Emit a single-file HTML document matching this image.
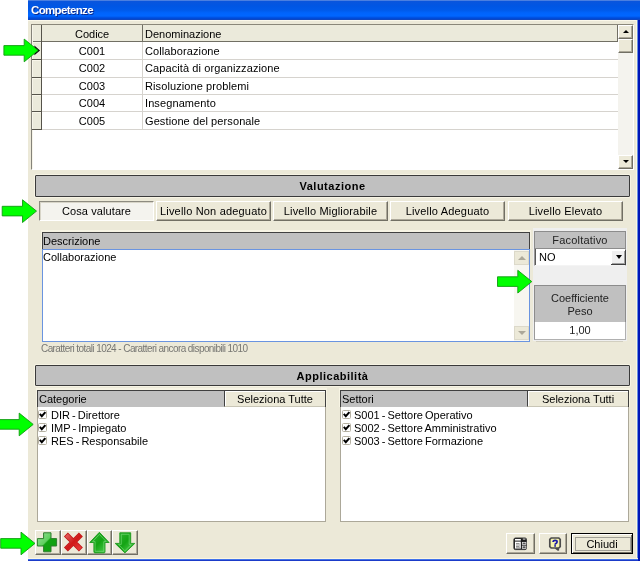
<!DOCTYPE html>
<html><head><meta charset="utf-8">
<style>
*{box-sizing:border-box;margin:0;padding:0}
html,body{width:641px;height:562px;background:#fff;overflow:hidden;position:relative;font-family:"Liberation Sans",sans-serif;font-size:11px;color:#000}
.a{position:absolute}
.t{position:absolute;white-space:pre;line-height:13px;will-change:transform}
#win{left:28px;top:0;width:613px;height:562px}
#title{left:28px;top:0;width:612px;height:20px;background:linear-gradient(to bottom,#4a7fe0 0,#4a7fe0 1px,#0a55dc 1px,#0056e4 6px,#005ae9 10px,#0064fc 13px,#0066ff 16px,#0052e4 17.5px,#0046d0 19px,#1c48b4 20px)}
#title .t{left:3px;top:3.5px;color:#fff;font-weight:bold;font-size:11.5px;letter-spacing:-0.65px;text-shadow:1px 1px 0 #0a2a8e}
#body{left:28px;top:20px;width:609px;height:539px;background:#ece9d8}
#rb{left:636px;top:20px;width:4px;height:541px;background:linear-gradient(to right,#fbf6de 0,#fbf6de 1px,#6a90e0 1px,#6a90e0 2px,#0018c0 2px,#0014ac 4px)}
#bb{left:28px;top:558px;width:610px;height:3px;background:linear-gradient(to bottom,#fbf6e0 0,#fbf6e0 1px,#4273ea 1px,#4273ea 2px,#1b3bc9 2px,#1b3bc9 3px)}
.btn{position:absolute;background:#ece9d8;border-top:1px solid #fff;border-left:1px solid #fff;border-right:1px solid #716f64;border-bottom:1px solid #716f64;box-shadow:inset -1px -1px 0 #aca899}
.btn .t{left:0;right:0;text-align:center;letter-spacing:0.18px}
.panel{position:absolute;background:#c0c0c0;border:1px solid #3a3a3a;border-radius:1px;box-shadow:0 0 0 1px #f7f4e4}
.panel .t{left:0;right:0;text-align:center;font-weight:bold;letter-spacing:0.5px}
.hdr{position:absolute;background:#c0c0c0;border-top:1px solid #404040;border-left:1px solid #404040;box-shadow:0 -1px 0 1px #f7f4e4}
</style></head><body>
<div class="a" id="title"><div class="t">Competenze</div></div>
<div class="a" id="body"></div>
<div class="a" style="left:28px;top:20px;width:609px;height:1px;background:#fbf8ea"></div>
<div class="a" id="rb"></div>
<div class="a" id="bb"></div>

<!-- GRID -->
<div class="a" style="left:31px;top:24px;width:603px;height:146px;background:#fff;border-top:1px solid #8a877a;border-left:1px solid #85837a;border-right:1px solid #fff;border-bottom:1px solid #fff"></div>
<!-- header -->
<div class="a" style="left:32px;top:25px;width:586px;height:17px;background:#ebeadb;border-bottom:1px solid #716f64"></div>
<div class="a" style="left:32px;top:25px;width:1px;height:144px;background:#f7f5ea"></div>
<div class="a" style="left:41px;top:25px;width:1px;height:105px;background:#55534a"></div>
<div class="a" style="left:142px;top:25px;width:1px;height:17px;background:#716f64"></div>
<div class="a" style="left:617px;top:25px;width:1px;height:17px;background:#716f64"></div>
<div class="t" style="left:75px;top:28px">Codice</div>
<div class="a" style="left:142px;top:42px;width:1px;height:87px;background:#d6d3ce"></div>
<div class="t" style="left:145px;top:28px">Denominazione</div>
<!-- indicator col -->
<div class="a" style="left:33px;top:42px;width:8px;height:88px;background:#ebeadb"></div>
<!-- rows -->
<div class="a" style="left:33px;top:112px;width:8px;height:1px;background:#f8f6ea"></div>
<div class="a" style="left:33px;top:95px;width:8px;height:1px;background:#f8f6ea"></div>
<div class="a" style="left:33px;top:78px;width:8px;height:1px;background:#f8f6ea"></div>
<div class="a" style="left:33px;top:60px;width:8px;height:1px;background:#f8f6ea"></div>
<div class="a" style="left:33px;top:42px;width:8px;height:1px;background:#f8f6ea"></div>
<div class="a" style="left:42px;top:59px;width:576px;height:1px;background:#d6d3ce"></div>
<div class="a" style="left:32px;top:59px;width:10px;height:1px;background:#55534a"></div>
<div class="t" style="left:42px;width:100px;text-align:center;top:45px">C001</div>
<div class="t" style="left:145px;top:45px;letter-spacing:0.1px">Collaborazione</div>
<div class="a" style="left:42px;top:77px;width:576px;height:1px;background:#d6d3ce"></div>
<div class="a" style="left:32px;top:77px;width:10px;height:1px;background:#55534a"></div>
<div class="t" style="left:42px;width:100px;text-align:center;top:62px">C002</div>
<div class="t" style="left:145px;top:62px;letter-spacing:0.1px">Capacità di organizzazione</div>
<div class="a" style="left:42px;top:94px;width:576px;height:1px;background:#d6d3ce"></div>
<div class="a" style="left:32px;top:94px;width:10px;height:1px;background:#55534a"></div>
<div class="t" style="left:42px;width:100px;text-align:center;top:80px">C003</div>
<div class="t" style="left:145px;top:80px;letter-spacing:0.1px">Risoluzione problemi</div>
<div class="a" style="left:42px;top:111px;width:576px;height:1px;background:#d6d3ce"></div>
<div class="a" style="left:32px;top:111px;width:10px;height:1px;background:#55534a"></div>
<div class="t" style="left:42px;width:100px;text-align:center;top:97px">C004</div>
<div class="t" style="left:145px;top:97px;letter-spacing:0.1px">Insegnamento</div>
<div class="a" style="left:42px;top:129px;width:576px;height:1px;background:#d6d3ce"></div>
<div class="a" style="left:32px;top:129px;width:10px;height:1px;background:#55534a"></div>
<div class="t" style="left:42px;width:100px;text-align:center;top:115px">C005</div>
<div class="t" style="left:145px;top:115px;letter-spacing:0.1px">Gestione del personale</div>

<!-- scrollbar -->
<div class="a" style="left:618px;top:25px;width:15px;height:144px;background:#f4f3ee"></div>
<div class="btn" style="left:618px;top:25px;width:15px;height:14px"></div>
<div class="a" style="left:623px;top:30px;width:0;height:0;border-left:3px solid transparent;border-right:3px solid transparent;border-bottom:3px solid #000"></div>
<div class="btn" style="left:618px;top:39px;width:15px;height:14px"></div>
<div class="btn" style="left:618px;top:155px;width:15px;height:14px"></div>
<div class="a" style="left:623px;top:160px;width:0;height:0;border-left:3px solid transparent;border-right:3px solid transparent;border-top:3px solid #000"></div>

<!-- VALUTAZIONE -->
<div class="panel" style="left:35px;top:175px;width:595px;height:22px"><div class="t" style="top:4px">Valutazione</div></div>
<div class="a" style="left:39px;top:201px;width:115px;height:20px;background:#f4f3ee;border-top:1px solid #8d8b80;border-left:1px solid #8d8b80;border-right:1px solid #fff;border-bottom:1px solid #fff;box-shadow:inset 1px 1px 0 #d8d5c8"><div class="t" style="left:0;right:0;text-align:center;top:3px;letter-spacing:0.1px">Cosa valutare</div></div>
<div class="btn" style="left:156px;top:201px;width:115px;height:20px"><div class="t" style="top:3px">Livello Non adeguato</div></div>
<div class="btn" style="left:273px;top:201px;width:115px;height:20px"><div class="t" style="top:3px">Livello Migliorabile</div></div>
<div class="btn" style="left:390px;top:201px;width:115px;height:20px"><div class="t" style="top:3px">Livello Adeguato</div></div>
<div class="btn" style="left:508px;top:201px;width:115px;height:20px"><div class="t" style="top:3px">Livello Elevato</div></div>

<!-- DESCRIZIONE -->
<div class="a" style="left:42px;top:232px;width:488px;height:17px;background:#c0c0c0;border-top:1px solid #404040;border-left:1px solid #404040;border-right:1px solid #404040;box-shadow:0 -1px 0 1px #f7f4e4"><div class="t" style="left:0px;top:2px">Descrizione</div></div>
<div class="a" style="left:42px;top:249px;width:488px;height:93px;background:#fff;border:1px solid #6a94e0"><div class="t" style="left:0px;top:1px">Collaborazione</div></div>
<div class="a" style="left:514px;top:250px;width:15px;height:91px;background:#f7f6f0"></div>
<div class="a" style="left:514px;top:251px;width:15px;height:14px;background:#ece9d8;border:1px solid #dcd9ca"></div>
<div class="a" style="left:518px;top:256px;width:0;height:0;border-left:4px solid transparent;border-right:4px solid transparent;border-bottom:4px solid #aca899"></div>
<div class="a" style="left:514px;top:326px;width:15px;height:14px;background:#ece9d8;border:1px solid #dcd9ca"></div>
<div class="a" style="left:518px;top:331px;width:0;height:0;border-left:4px solid transparent;border-right:4px solid transparent;border-top:4px solid #aca899"></div>
<div class="t" style="left:41px;top:342px;font-size:10px;letter-spacing:-0.58px;color:#777773">Caratteri totali 1024 - Caratteri ancora disponibili 1010</div>

<!-- RIGHT PANEL -->
<div class="a" style="left:533px;top:228px;width:94px;height:113px;background:#efefef"></div>
<div class="a" style="left:536px;top:341px;width:87px;height:1px;background:#d2cfc0"></div>
<div class="a" style="left:534px;top:231px;width:92px;height:18px;background:#c0c0c0;border:1px solid #8c8c8c"><div class="t" style="left:0;right:0;text-align:center;top:2px;color:#222;letter-spacing:0.2px">Facoltativo</div></div>
<div class="a" style="left:534px;top:249px;width:92px;height:17px;background:#fff;border-left:1px solid #9a9a9a;border-right:1px solid #9a9a9a;border-bottom:1px solid #f4f4f4;box-shadow:inset 1px 0 0 #5a5a5a"><div class="t" style="left:4px;top:2px">NO</div></div>
<div class="a" style="left:611px;top:250px;width:15px;height:15px;background:#f0f0f0;border-right:1px solid #404040;border-bottom:1px solid #404040;box-shadow:inset 1px 1px 0 #fff,inset -1px -1px 0 #a0a0a0"></div>
<div class="a" style="left:616px;top:255px;width:0;height:0;border-left:3px solid transparent;border-right:3px solid transparent;border-top:4px solid #000"></div>
<div class="a" style="left:534px;top:285px;width:92px;height:38px;background:#c0c0c0;border:1px solid #8c8c8c"><div class="t" style="left:0;right:0;text-align:center;top:6px;color:#222;line-height:13px">Coefficiente
Peso</div></div>
<div class="a" style="left:534px;top:322px;width:92px;height:18px;background:#fff;border:1px solid #b0b0b0;border-top:none;border-left-color:#9a9a9a"><div class="t" style="left:0;right:0;text-align:center;top:2px;color:#222">1,00</div></div>

<!-- APPLICABILITA -->
<div class="panel" style="left:35px;top:365px;width:595px;height:21px"><div class="t" style="top:4px">Applicabilità</div></div>

<div class="a" style="left:37px;top:407px;width:289px;height:115px;background:#fff;border:1px solid #aca899;border-top:none"></div>
<div class="hdr" style="left:37px;top:390px;width:289px;height:17px;border-right:1px solid #404040"><div class="t" style="left:1px;top:2px">Categorie</div></div>
<div class="a" style="left:224px;top:391px;width:101px;height:16px;background:#ece9d8;border-left:1px solid #404040;border-bottom:1px solid #c9c6b6;box-shadow:inset 1px 1px 0 #fff"><div class="t" style="left:0;right:0;text-align:center;top:1.5px">Seleziona Tutte</div></div>

<div class="a" style="left:340px;top:407px;width:289px;height:115px;background:#fff;border:1px solid #aca899;border-top:none"></div>
<div class="hdr" style="left:340px;top:390px;width:289px;height:17px;border-right:1px solid #404040"><div class="t" style="left:1px;top:2px">Settori</div></div>
<div class="a" style="left:527px;top:391px;width:101px;height:16px;background:#ece9d8;border-left:1px solid #404040;border-bottom:1px solid #c9c6b6;box-shadow:inset 1px 1px 0 #fff"><div class="t" style="left:0;right:0;text-align:center;top:1.5px">Seleziona Tutti</div></div>

<svg class="a" style="left:38px;top:410px" width="9" height="9" viewBox="0 0 9 9"><rect x="0.5" y="0.5" width="8" height="8" fill="#fff" stroke="#b5b1a2" rx="1"/><path d="M1.8 3.9 L3.8 6.2 L7.4 2.2" fill="none" stroke="#000" stroke-width="2"/></svg>
<div class="t" style="left:51px;top:409px;word-spacing:-1px">DIR - Direttore</div>
<svg class="a" style="left:342px;top:410px" width="9" height="9" viewBox="0 0 9 9"><rect x="0.5" y="0.5" width="8" height="8" fill="#fff" stroke="#b5b1a2" rx="1"/><path d="M1.8 3.9 L3.8 6.2 L7.4 2.2" fill="none" stroke="#000" stroke-width="2"/></svg>
<div class="t" style="left:354px;top:409px;word-spacing:-1px">S001 - Settore Operativo</div>
<svg class="a" style="left:38px;top:423px" width="9" height="9" viewBox="0 0 9 9"><rect x="0.5" y="0.5" width="8" height="8" fill="#fff" stroke="#b5b1a2" rx="1"/><path d="M1.8 3.9 L3.8 6.2 L7.4 2.2" fill="none" stroke="#000" stroke-width="2"/></svg>
<div class="t" style="left:51px;top:422px;word-spacing:-1px">IMP - Impiegato</div>
<svg class="a" style="left:342px;top:423px" width="9" height="9" viewBox="0 0 9 9"><rect x="0.5" y="0.5" width="8" height="8" fill="#fff" stroke="#b5b1a2" rx="1"/><path d="M1.8 3.9 L3.8 6.2 L7.4 2.2" fill="none" stroke="#000" stroke-width="2"/></svg>
<div class="t" style="left:354px;top:422px;word-spacing:-1px">S002 - Settore Amministrativo</div>
<svg class="a" style="left:38px;top:436px" width="9" height="9" viewBox="0 0 9 9"><rect x="0.5" y="0.5" width="8" height="8" fill="#fff" stroke="#b5b1a2" rx="1"/><path d="M1.8 3.9 L3.8 6.2 L7.4 2.2" fill="none" stroke="#000" stroke-width="2"/></svg>
<div class="t" style="left:51px;top:435px;word-spacing:-1px">RES - Responsabile</div>
<svg class="a" style="left:342px;top:436px" width="9" height="9" viewBox="0 0 9 9"><rect x="0.5" y="0.5" width="8" height="8" fill="#fff" stroke="#b5b1a2" rx="1"/><path d="M1.8 3.9 L3.8 6.2 L7.4 2.2" fill="none" stroke="#000" stroke-width="2"/></svg>
<div class="t" style="left:354px;top:435px;word-spacing:-1px">S003 - Settore Formazione</div>

<!-- BOTTOM BUTTONS -->
<div class="btn" style="left:35px;top:530px;width:26px;height:25px"></div>
<div class="btn" style="left:61px;top:530px;width:26px;height:25px"></div>
<div class="btn" style="left:87px;top:530px;width:25px;height:25px"></div>
<div class="btn" style="left:112px;top:530px;width:26px;height:25px"></div>

<div class="btn" style="left:506px;top:533px;width:29px;height:21px"></div>
<div class="btn" style="left:539px;top:533px;width:28px;height:21px"></div>
<div class="a" style="left:571px;top:533px;width:62px;height:21px;background:#ece9d8;border:1px solid #000;box-shadow:inset 1px 1px 0 #fff,inset -1px -1px 0 #716f64"><svg class="a" style="left:2px;top:2px" width="58" height="16"><rect x="1.5" y="1.5" width="55" height="13" fill="none" stroke="#555" stroke-width="1" stroke-dasharray="1 1"/></svg><div class="t" style="left:0;right:0;text-align:center;top:4px">Chiudi</div></div>

<svg class="a" style="left:0;top:0;z-index:10" width="641" height="562" viewBox="0 0 641 562">
<defs>
<linearGradient id="gp" x1="0" y1="0" x2="1" y2="1"><stop offset="0" stop-color="#9be49b"/><stop offset="0.45" stop-color="#5fcf5f"/><stop offset="0.5" stop-color="#12a312"/><stop offset="1" stop-color="#10a010"/></linearGradient>
<linearGradient id="gr" x1="0" y1="0" x2="1" y2="1"><stop offset="0" stop-color="#e35a5a"/><stop offset="0.5" stop-color="#d01818"/><stop offset="1" stop-color="#e83a3a"/></linearGradient>
<linearGradient id="gu" x1="0" y1="0" x2="1" y2="1"><stop offset="0" stop-color="#36b836"/><stop offset="0.5" stop-color="#14a414"/><stop offset="1" stop-color="#5ad65a"/></linearGradient>
</defs>
<path d="M43.6,532.8 H51 V538.6 H56.6 V546 H51 V551.8 H43.6 V546 H37.4 V538.6 H43.6 Z" fill="url(#gp)" stroke="#2f7d2f" stroke-width="1"/>
<path d="M65.9,534.6 L80.9,549.6 M80.9,534.6 L65.9,549.6" stroke="#c01818" stroke-width="5.6" stroke-linecap="butt"/>
<path d="M66.5,535.2 L80.3,549 M80.3,535.2 L66.5,549" stroke="url(#gr)" stroke-width="4" stroke-linecap="butt"/>
<path d="M99.4,532.3 L109.1,542.5 H105 V551.8 Q105,552.9 104,552.9 H94.9 Q93.9,552.9 93.9,551.8 V542.5 H89.7 Z" fill="url(#gu)" stroke="#1f9a1f" stroke-width="0.9"/>
<path d="M119.8,532.8 H130.7 V543.4 H134.8 L124.9,552.9 L115.2,543.4 H119.8 Z" fill="url(#gu)" stroke="#1f9a1f" stroke-width="0.9"/>
<path d="M99.4,534.4 L106.2,541.6 H103.8 V551.3 H95.1 V541.6 H92.6 Z" fill="none" stroke="#8ee48e" stroke-width="0.7" opacity="0.75"/>
<path d="M121.3,534.3 H129.2 V544.4 H131.4 L124.9,550.8 L118.5,544.4 H121.3 Z" fill="none" stroke="#8ee48e" stroke-width="0.7" opacity="0.75"/>
<polygon points="34.4,45.5 40,50.4 34.4,55.3" fill="#000"/>
<polygon points="3.9,45.6 24.2,45.6 24.2,39.1 38.2,50.4 24.2,61.8 24.2,55.2 3.9,55.2" fill="#00ff00" stroke="#129a12" stroke-width="0.9" stroke-linejoin="miter"/>
<polygon points="2.2,206.3 22.5,206.3 22.5,199.8 36.5,211.1 22.5,222.5 22.5,215.9 2.2,215.9" fill="#00ff00" stroke="#129a12" stroke-width="0.9" stroke-linejoin="miter"/>
<polygon points="497.5,276.8 517.8,276.8 517.8,270.3 531.8,281.6 517.8,293.0 517.8,286.4 497.5,286.4" fill="#00ff00" stroke="#129a12" stroke-width="0.9" stroke-linejoin="miter"/>
<polygon points="-1.1,419.6 19.2,419.6 19.2,413.1 33.2,424.4 19.2,435.8 19.2,429.2 -1.1,429.2" fill="#00ff00" stroke="#129a12" stroke-width="0.9" stroke-linejoin="miter"/>
<polygon points="0.7,538.6 21.0,538.6 21.0,532.1 35.0,543.4 21.0,554.8 21.0,548.2 0.7,548.2" fill="#00ff00" stroke="#129a12" stroke-width="0.9" stroke-linejoin="miter"/>
</svg>
<svg class="a" style="left:0;top:0;z-index:9" width="641" height="562" viewBox="0 0 641 562">
<rect x="513.9" y="538" width="12.6" height="11.6" rx="1.5" fill="#1a1a1a" stroke="#3a3a3a" stroke-width="1"/>
<rect x="515" y="539" width="5.8" height="1.6" fill="#fff"/>
<rect x="515" y="541.6" width="5.8" height="7" fill="#fff"/>
<path d="M516,543.5 H519.5 M516,545 H520 M516,546.5 H519.5 M516,547.8 H520" stroke="#777" stroke-width="0.8"/>
<rect x="522.8" y="538.6" width="2.6" height="1" fill="#ddd"/>
<rect x="522.3" y="542.3" width="3.6" height="2.2" fill="#555" stroke="#eee" stroke-width="0.7"/>
<rect x="522.3" y="546" width="3.6" height="2.4" fill="#555" stroke="#eee" stroke-width="0.7"/>
<path d="M551.2,538 H558.8 L560.2,539.4 V546.6 L558.8,548 H557.4 L558.6,550.4 L555.6,548 H551.2 L549.8,546.6 V539.4 Z" fill="#f7f5ac" stroke="#4c4c4c" stroke-width="1.7" stroke-linejoin="miter"/>
<path d="M553.1,542 Q553.1,540.3 555.1,540.3 Q557.1,540.3 557.1,541.8 Q557.1,542.9 555.9,543.5 Q555.1,543.9 555.1,544.7" fill="none" stroke="#1a1aa8" stroke-width="1.7"/><rect x="554.2" y="545.2" width="1.8" height="1.5" fill="#1a1aa8"/>
</svg>
</body></html>
